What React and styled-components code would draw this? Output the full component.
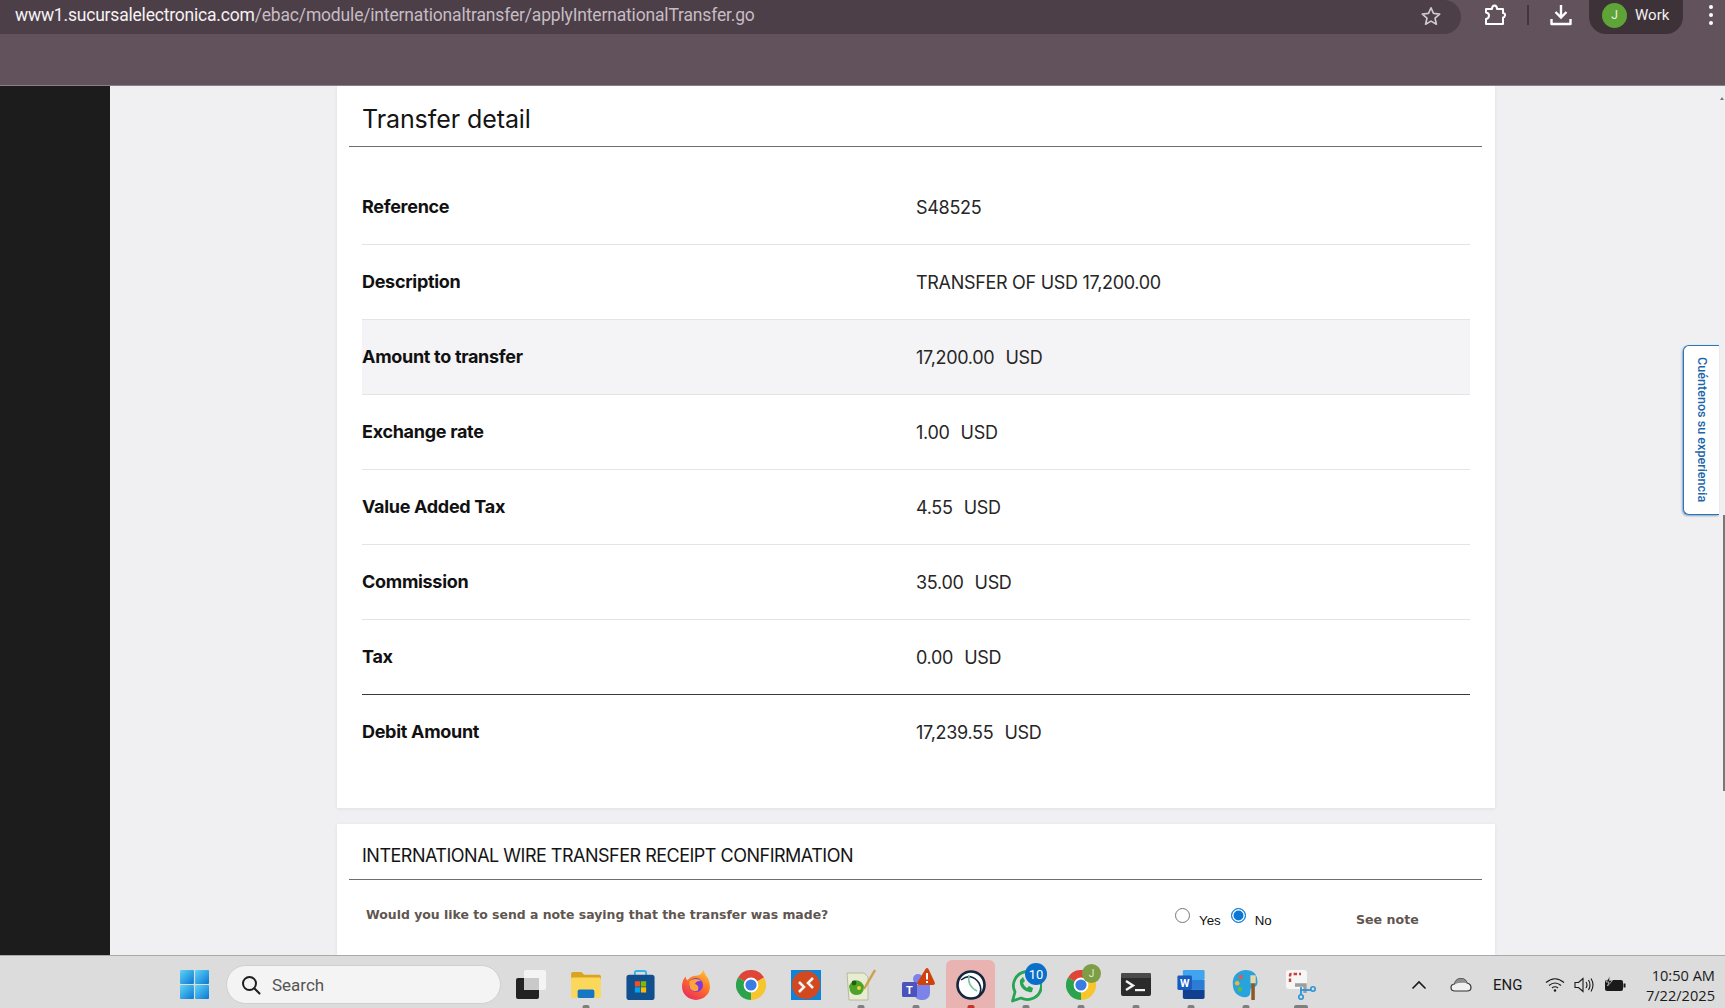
import * as React from "react";
import styled, { createGlobalStyle } from "styled-components";

const GlobalStyle = createGlobalStyle`
  html, body { margin: 0; padding: 0; height: 100%; overflow: hidden; }
  body { font-family: "Roboto", "Liberation Sans", sans-serif; background: #f0f0f2; }
  #root { height: 1008px; }
`;

const rows = [
  { label: "Reference", value: "S48525" },
  { label: "Description", value: "TRANSFER OF USD 17,200.00" },
  { label: "Amount to transfer", value: "17,200.00", unit: "USD", shaded: true },
  { label: "Exchange rate", value: "1.00", unit: "USD" },
  { label: "Value Added Tax", value: "4.55", unit: "USD" },
  { label: "Commission", value: "35.00", unit: "USD" },
  { label: "Tax", value: "0.00", unit: "USD", dark: true },
  { label: "Debit Amount", value: "17,239.55", unit: "USD", last: true },
];

const WindowsIcon = () => (
  <svg width="29" height="29" viewBox="0 0 30 30">
    <defs>
      <linearGradient id="win" x1="0" y1="0" x2="1" y2="1">
        <stop offset="0" stopColor="#5fd4f6" />
        <stop offset="1" stopColor="#0a78d4" />
      </linearGradient>
    </defs>
    <rect x="0" y="0" width="14.4" height="14.4" rx="1" fill="url(#win)" />
    <rect x="15.6" y="0" width="14.4" height="14.4" rx="1" fill="url(#win)" />
    <rect x="0" y="15.6" width="14.4" height="14.4" rx="1" fill="url(#win)" />
    <rect x="15.6" y="15.6" width="14.4" height="14.4" rx="1" fill="url(#win)" />
  </svg>
);

const SearchIcon = () => (
  <svg width="20" height="20" viewBox="0 0 20 20" fill="none" stroke="#1e1e1e" strokeWidth="2">
    <circle cx="8.5" cy="8.5" r="6.5" />
    <path d="M13.5 13.5 L18.5 18.5" strokeLinecap="round" />
  </svg>
);

const TaskViewIcon = () => (
  <svg width="30" height="29" viewBox="0 0 30 29">
    <rect x="8" y="0" width="22" height="20" rx="2" fill="#f4f4f4" />
    <rect x="0" y="8" width="23" height="21" rx="2" fill="#222" />
    <rect x="8" y="8" width="15" height="12" fill="#c9c9c9" />
  </svg>
);

const FolderIcon = () => (
  <svg width="30" height="27" viewBox="0 0 32 29">
    <path d="M0 3 Q0 1 2 1 H11 L14 4 H30 Q32 4 32 6 V10 H0 Z" fill="#d9a520" />
    <path d="M0 7 H30 Q32 7 32 9 V27 Q32 29 30 29 H2 Q0 29 0 27 Z" fill="#fbd75c" />
    <rect x="7" y="20" width="18" height="9" rx="2" fill="#1576c4" />
  </svg>
);

const StoreIcon = () => (
  <svg width="29" height="30" viewBox="0 0 30 32">
    <path d="M9 7 V3 Q9 1 11 1 H19 Q21 1 21 3 V7" fill="none" stroke="#37b4e6" strokeWidth="2" />
    <rect x="0" y="5" width="30" height="27" rx="3" fill="#10508f" />
    <rect x="9" y="12" width="5.6" height="5.6" fill="#f25022" />
    <rect x="15.4" y="12" width="5.6" height="5.6" fill="#7fba00" />
    <rect x="9" y="18.4" width="5.6" height="5.6" fill="#00a4ef" />
    <rect x="15.4" y="18.4" width="5.6" height="5.6" fill="#ffb900" />
  </svg>
);

const FirefoxIcon = () => (
  <svg width="28" height="30" viewBox="0 0 30 32">
    <defs>
      <linearGradient id="ff" x1="0.8" y1="0" x2="0.2" y2="1">
        <stop offset="0" stopColor="#ffc02e" />
        <stop offset="0.5" stopColor="#ff6a2b" />
        <stop offset="1" stopColor="#e8295f" />
      </linearGradient>
    </defs>
    <path d="M23 0 Q25 6 28 9 Q30 13 30 18 A15 14 0 0 1 0 18 Q0 11 4 7 Q4 10 6 11 Q9 6 15 6 Q21 6 23 0 Z" fill="url(#ff)" />
    <circle cx="15" cy="16" r="7.5" fill="#7b3ae0" />
    <path d="M8 12 Q15 7 21 12 Q15 11 14 15 Q19 17 17 22 Q12 24 9 20 Q7 16 8 12 Z" fill="#ffa436" />
  </svg>
);

const ChromeIcon = ({ size = 30 }) => (
  <svg width={size} height={size} viewBox="0 0 30 30">
    <path d="M15 15 L2 7.5 A15 15 0 0 1 28 7.5 Z" fill="#de4437" />
    <path d="M15 15 L28 7.5 A15 15 0 0 1 15 30 Z" fill="#f7c52c" />
    <path d="M15 15 L15 30 A15 15 0 0 1 2 7.5 Z" fill="#2ba24c" />
    <circle cx="15" cy="15" r="7.4" fill="#fff" />
    <circle cx="15" cy="15" r="5.6" fill="#3b7ce4" />
  </svg>
);

const RemoteIcon = () => (
  <svg width="30" height="30" viewBox="0 0 30 30">
    <rect width="30" height="30" fill="#1183d6" />
    <circle cx="15" cy="15" r="14" fill="#d2491f" />
    <path d="M8 12 L13 17 L8 22 M22 8 L17 13 L22 18" fill="none" stroke="#f3f3f3" strokeWidth="2.6" />
  </svg>
);

const NotepadIcon = () => (
  <svg width="30" height="32" viewBox="0 0 30 32">
    <path d="M1 4 H18 L22 8 V31 H3 Z" fill="#e8ecd2" stroke="#aab18a" strokeWidth="0.8" />
    <path d="M3 17 Q8 8 15 13 Q21 18 15 25 Q7 28 4 22 Z" fill="#4da22a" />
    <circle cx="8" cy="14" r="2.4" fill="#1f5f10" />
    <circle cx="13" cy="19" r="2" fill="#e7d43a" />
    <path d="M18 20 L29 1" stroke="#c9a24a" strokeWidth="2.4" />
  </svg>
);

const TeamsIcon = () => (
  <svg width="38" height="36" viewBox="0 0 38 36">
    <circle cx="21" cy="12" r="5" fill="#7b83eb" />
    <circle cx="29" cy="14" r="3.5" fill="#5059c9" />
    <path d="M17 18 H33 V26 A7 7 0 0 1 26 33 H24 A7 7 0 0 1 17 26 Z" fill="#7b83eb" />
    <rect x="5" y="15" width="15" height="15" rx="1.5" fill="#4b53bc" />
    <text x="12.5" y="27" fontSize="11" fontWeight="700" fill="#fff" textAnchor="middle" fontFamily="Roboto, sans-serif">T</text>
    <path d="M28.5 2 Q30 0 31.5 2 L38 16 Q38 18 36 18 H22 Q20 18 20 16 Z" fill="#d1410c" />
    <rect x="29" y="6" width="2" height="6.5" fill="#fff" />
    <rect x="29" y="14" width="2" height="2" fill="#fff" />
  </svg>
);

const OrbitIcon = () => (
  <svg width="30" height="30" viewBox="0 0 30 30" fill="none">
    <circle cx="15" cy="15" r="13.5" fill="#fff" stroke="#12263f" strokeWidth="2.6" />
    <path d="M5 10 Q15 2 23 13 Q27 20 22 27" stroke="#12263f" strokeWidth="1.6" />
    <path d="M13 5 Q11 16 21 21" stroke="#7cc3a0" strokeWidth="1.6" />
  </svg>
);

const WhatsappIcon = () => (
  <svg width="32" height="36" viewBox="0 0 32 36" fill="none">
    <path d="M2.5 34 L5 25 A14 14 0 1 1 11 31 Z" stroke="#27a552" strokeWidth="2.8" strokeLinejoin="round" fill="#fff" fillOpacity="0.15" />
    <path d="M10 13 Q9 18 13 22 Q17 26 22 25 L23 21 L19 19 L17 21 Q14 19 13 16 L15 14 L13 10 Z" fill="#27a552" />
  </svg>
);

const TerminalIcon = () => (
  <svg width="30" height="23" viewBox="0 0 30 23">
    <rect width="30" height="23" rx="2" fill="#2b2b2b" />
    <rect width="30" height="5" rx="1.5" fill="#4a4a4a" />
    <path d="M5 8 L12 12.5 L5 17" fill="none" stroke="#f2f2f2" strokeWidth="2.4" />
    <rect x="14" y="16" width="10" height="2.2" fill="#f2f2f2" />
  </svg>
);

const WordIcon = () => (
  <svg width="30" height="29" viewBox="0 0 30 32">
    <rect x="6" y="0" width="24" height="11" rx="1.5" fill="#41a5ee" />
    <rect x="6" y="11" width="24" height="11" fill="#2b7cd3" />
    <path d="M6 22 H30 V30 Q30 32 28 32 H8 Q6 32 6 30 Z" fill="#103f91" />
    <rect x="0" y="6" width="16" height="16" rx="1.5" fill="#185abd" />
    <text x="8" y="18.5" fontSize="12" fontWeight="700" fill="#fff" textAnchor="middle" fontFamily="Roboto, sans-serif">W</text>
  </svg>
);

const PaintIcon = () => (
  <svg width="28" height="30" viewBox="0 0 30 34">
    <path d="M14 0 Q28 0 28 14 Q28 19 24 19 Q20 19 20 24 Q20 31 13 31 Q0 29 0 15 Q0 2 14 0 Z" fill="#27a3dd" />
    <circle cx="9" cy="8" r="2.6" fill="#e25c4c" />
    <circle cx="5" cy="15" r="2.6" fill="#f2b632" />
    <circle cx="8" cy="22" r="2.6" fill="#5dbb46" />
    <rect x="21" y="14" width="4" height="20" fill="#8b5a2b" />
    <path d="M20 6 H26 V15 H20 Z" fill="#e8d8a8" />
  </svg>
);

const SnipIcon = () => (
  <svg width="30" height="30" viewBox="0 0 30 30" fill="none">
    <rect x="0" y="0" width="21" height="19" rx="3" fill="#f6f6f6" />
    <path d="M4 12 V5 Q4 4 5 4 H15" stroke="#c6423d" strokeWidth="2.4" strokeDasharray="3.5 2" />
    <path d="M9 15 H19 V23" stroke="#9d9d9d" strokeWidth="3.4" />
    <path d="M14 20 H25" stroke="#2c94d8" strokeWidth="1.8" />
    <circle cx="27" cy="19" r="2.2" stroke="#2c94d8" strokeWidth="1.6" />
    <circle cx="15" cy="27" r="2.2" stroke="#2c94d8" strokeWidth="1.6" />
    <path d="M15 25 V17" stroke="#2c94d8" strokeWidth="1.8" />
  </svg>
);

const apps = [
  { icon: <TaskViewIcon /> },
  { icon: <FolderIcon />, open: true },
  { icon: <StoreIcon /> },
  { icon: <FirefoxIcon /> },
  { icon: <ChromeIcon /> },
  { icon: <RemoteIcon /> },
  { icon: <NotepadIcon />, open: true },
  { icon: <TeamsIcon />, open: true },
  { icon: <OrbitIcon />, active: true },
  { icon: <WhatsappIcon />, open: true, badge: "10" },
  { icon: <ChromeIcon />, open: true, avatar: "J" },
  { icon: <TerminalIcon />, open: true },
  { icon: <WordIcon />, open: true },
  { icon: <PaintIcon />, open: true },
  { icon: <SnipIcon />, open: true, wide: true },
];

export default function App() {
  return (
    <Page>
      <GlobalStyle />
      <BrowserBar>
        <TopRow>
          <AddressBar>
            <Url>
              <b>www1.sucursalelectronica.com</b>/ebac/module/internationaltransfer/applyInternationalTransfer.go
            </Url>
            <svg width="22" height="22" viewBox="0 0 24 24" fill="none" stroke="#cfc8cc" strokeWidth="1.8" strokeLinejoin="round">
              <path d="M12 3 L14.7 9.2 L21.5 9.9 L16.4 14.4 L17.9 21 L12 17.6 L6.1 21 L7.6 14.4 L2.5 9.9 L9.3 9.2 Z" />
            </svg>
          </AddressBar>
          <ToolIcons>
            <svg width="22" height="22" viewBox="0 0 22 22" fill="none" stroke="#fff" strokeWidth="2" strokeLinejoin="round">
              <path d="M2 5 H8 Q8 1.5 10.5 1.5 Q13 1.5 13 5 H19 V9 Q21.5 9.5 21 11.5 Q20.5 13.5 19 13.5 V20 H2 V15 Q5 14.5 5 11.5 Q5 9 2 8.5 Z" />
            </svg>
            <Separator />
            <svg width="22" height="22" viewBox="0 0 22 22" fill="none" stroke="#fff" strokeWidth="2.4">
              <path d="M11 1 V13 M5.5 8 L11 13.5 L16.5 8" />
              <path d="M1.5 15 V20 H20.5 V15" strokeLinejoin="round" />
            </svg>
          </ToolIcons>
          <Profile>
            <Avatar>J</Avatar>
            Work
          </Profile>
          <MenuDots>
            <i /><i /><i />
          </MenuDots>
        </TopRow>
      </BrowserBar>

      <Viewport>
        <BlackRail />
        <Content>
          <Card $height={722}>
            <CardTitle>Transfer detail</CardTitle>
            <Table>
              {rows.map((r) => (
                <Row key={r.label} $shaded={r.shaded} $dark={r.dark} $last={r.last}>
                  <Label>{r.label}</Label>
                  <Value>
                    {r.value}
                    {r.unit && <Unit>{r.unit}</Unit>}
                  </Value>
                </Row>
              ))}
            </Table>
          </Card>
          <Card>
            <SectionTitle>INTERNATIONAL WIRE TRANSFER RECEIPT CONFIRMATION</SectionTitle>
            <NoteRow>
              <Question>Would you like to send a note saying that the transfer was made?</Question>
              <Choices>
                <Radio />
                <ChoiceLabel>Yes</ChoiceLabel>
                <Radio $on />
                <ChoiceLabel>No</ChoiceLabel>
              </Choices>
              <SeeNote>See note</SeeNote>
            </NoteRow>
          </Card>
        </Content>
        <Feedback>Cuéntenos su experiencia</Feedback>
        <ScrollArrow />
        <ScrollThumb />
      </Viewport>

      <Taskbar>
        <StartSlot><WindowsIcon /></StartSlot>
        <SearchBox>
          <SearchIcon />
          Search
        </SearchBox>
        {apps.map((a, i) => (
          <AppSlot key={i} $active={a.active}>
            {a.icon}
            {a.badge && <Badge>{a.badge}</Badge>}
            {a.avatar && <AvatarBadge>{a.avatar}</AvatarBadge>}
            {(a.open || a.active) && <Dot $active={a.active} $wide={a.wide} />}
          </AppSlot>
        ))}
        <Tray>
          <svg width="16" height="10" viewBox="0 0 16 10" fill="none" stroke="#1a1a1a" strokeWidth="1.6">
            <path d="M1.5 8.5 L8 2 L14.5 8.5" />
          </svg>
          <CloudIcon width="22" height="15" viewBox="0 0 22 15" stroke="#333" strokeWidth="1.2">
            <path d="M5 14 Q1 14 1 10.5 Q1 7.5 4.5 7 Q6 1.5 11 1.5 Q15.5 1.5 17 6 Q21 7 21 10.5 Q21 14 17 14 Z" fill="#f1f1f1" />
            <path d="M4.5 7 Q6 1.5 11 1.5 Q15.5 1.5 17 6 Q11 5 4.5 7 Z" fill="#8e8e8e" stroke="none" />
          </CloudIcon>
          <Lang>ENG</Lang>
          <TrayIcons>
            <svg width="20" height="16" viewBox="0 0 20 16" fill="none" stroke="#1a1a1a" strokeWidth="1.2">
              <path d="M1 5.5 Q10 -2 19 5.5 M4 8.5 Q10 3.5 16 8.5 M7 11 Q10 8.5 13 11" />
              <circle cx="10" cy="13.5" r="1.2" fill="#1a1a1a" stroke="none" />
            </svg>
            <svg width="21" height="16" viewBox="0 0 21 16" fill="none" stroke="#1a1a1a" strokeWidth="1.1">
              <path d="M1 5.5 H4.5 L9 1.5 V14.5 L4.5 10.5 H1 Z" />
              <path d="M12 5 Q14 8 12 11 M14.5 3 Q17.5 8 14.5 13 M17 1.5 Q21 8 17 14.5" />
            </svg>
            <svg width="22" height="17" viewBox="0 0 22 17">
              <rect x="1" y="4" width="18" height="11" rx="2" fill="#1a1a1a" />
              <rect x="19.5" y="7.5" width="2" height="4" fill="#1a1a1a" />
              <path d="M6 0 L2 6 H5 L3.5 10 L8.5 4.5 H5.5 Z" fill="#1a1a1a" stroke="#dcdcdc" strokeWidth="0.7" />
            </svg>
          </TrayIcons>
          <Clock>
            <span>10:50 AM</span>
            <span>7/22/2025</span>
          </Clock>
        </Tray>
      </Taskbar>
    </Page>
  );
}

const Page = styled.div`
  position: relative;
  width: 1725px;
  height: 1008px;
  display: flex;
  flex-direction: column;
  overflow: hidden;
`;

const BrowserBar = styled.div`
  height: 86px;
  flex: none;
  background: #61525c;
  border-bottom: 1px solid #8b7f87;
  box-sizing: border-box;
`;

const TopRow = styled.div`
  display: flex;
  align-items: flex-start;
  height: 34px;
`;

const AddressBar = styled.div`
  width: 1461px;
  height: 34px;
  flex: none;
  box-sizing: border-box;
  display: flex;
  align-items: center;
  justify-content: space-between;
  padding: 0 19px 3px 15px;
  background: #4c3f48;
  border-radius: 0 17px 17px 0;
`;

const Url = styled.div`
  font-family: "Roboto", sans-serif;
  font-size: 17.5px;
  line-height: 20px;
  margin-top: -2px;
  letter-spacing: -0.17px;
  color: #c7bcc3;
  white-space: nowrap;
  b {
    font-weight: 400;
    letter-spacing: -0.2px;
    color: #f6f2f4;
  }
`;

const ToolIcons = styled.div`
  display: flex;
  align-items: center;
  width: 128px;
  height: 30px;
  flex: none;
  padding-left: 23px;
  box-sizing: border-box;
`;

const Separator = styled.div`
  width: 2px;
  height: 20px;
  margin: 0 21px 0 21px;
  background: #43363e;
`;

const Profile = styled.div`
  width: 94px;
  height: 34px;
  flex: none;
  box-sizing: border-box;
  display: flex;
  align-items: center;
  gap: 8px;
  padding: 0 0 4px 13px;
  color: #f3eff1;
  font-size: 15px;
  background: #3e3239;
  border-radius: 0 0 17px 17px;
`;

const Avatar = styled.div`
  width: 25px;
  height: 25px;
  border-radius: 50%;
  background: #5fa436;
  color: #e8f3e0;
  font-size: 12px;
  display: flex;
  align-items: center;
  justify-content: center;
`;

const MenuDots = styled.div`
  display: flex;
  flex-direction: column;
  align-items: center;
  gap: 4px;
  margin-left: 26px;
  margin-top: 5px;
  i {
    width: 4px;
    height: 4px;
    border-radius: 50%;
    background: #fff;
  }
`;

const Viewport = styled.div`
  position: relative;
  flex: 1;
  display: flex;
  min-height: 0;
  overflow: hidden;
  background: #f0f0f2;
`;

const BlackRail = styled.div`
  width: 110px;
  flex: none;
  background: #1c1c1c;
`;

const Content = styled.div`
  width: 1158px;
  margin-left: 227px;
  display: flex;
  flex-direction: column;
  gap: 16px;
`;

const Card = styled.div`
  flex: ${(p) => (p.$height ? "none" : "1")};
  box-sizing: border-box;
  height: ${(p) => (p.$height ? p.$height + "px" : "auto")};
  padding: 0 13px 0 12px;
  background: #fff;
  box-shadow: 0 1px 4px rgba(0, 0, 0, 0.07);
`;

const CardTitle = styled.h2`
  margin: 0;
  height: 61px;
  box-sizing: border-box;
  padding: 6px 0 0 13px;
  display: flex;
  align-items: center;
  font-family: "Inter", sans-serif;
  font-size: 25px;
  font-weight: 400;
  letter-spacing: -0.08px;
  color: #141414;
  border-bottom: 1px solid #6e6e6e;
`;

const Table = styled.div`
  margin: 23px 12px 0 13px;
`;

const Row = styled.div`
  height: 75px;
  box-sizing: border-box;
  display: flex;
  align-items: center;
  background: ${(p) => (p.$shaded ? "#f4f4f6" : "transparent")};
  border-bottom: 1px solid ${(p) => (p.$last ? "transparent" : p.$dark ? "#3a3a3a" : "#e4e4e6")};
`;

const Label = styled.div`
  width: 554px;
  flex: none;
  font-family: "Inter", sans-serif;
  font-size: 18px;
  font-weight: 700;
  letter-spacing: -0.3px;
  color: #111;
  margin-top: -2px;
`;

const Value = styled.div`
  font-family: "Inter", sans-serif;
  font-size: 18px;
  letter-spacing: -0.3px;
  color: #262626;
`;

const Unit = styled.span`
  margin-left: 11px;
`;

const SectionTitle = styled.h3`
  margin: 0;
  height: 56px;
  box-sizing: border-box;
  padding: 8px 0 0 13px;
  display: flex;
  align-items: center;
  font-family: "Inter", sans-serif;
  font-size: 18px;
  font-weight: 400;
  letter-spacing: -0.5px;
  color: #141414;
  border-bottom: 1px solid #6e6e6e;
`;

const NoteRow = styled.div`
  display: flex;
  align-items: flex-start;
  padding: 27px 0 0 17px;
`;

const Question = styled.div`
  width: 809px;
  flex: none;
  font-family: "DejaVu Sans", Verdana, sans-serif;
  font-size: 12.45px;
  line-height: 16px;
  font-weight: 700;
  color: #5f5650;
`;

const Choices = styled.div`
  display: flex;
  align-items: center;
  width: 181px;
  height: 16px;
  margin-top: 5px;
  flex: none;
`;

const Radio = styled.span`
  width: 15px;
  height: 15px;
  flex: none;
  box-sizing: border-box;
  border-radius: 50%;
  margin-top: -9px;
  border: ${(p) => (p.$on ? "1.5px solid #0a78d4" : "1px solid #767676")};
  background: ${(p) => (p.$on ? "#0a78d4" : "#fff")};
  box-shadow: ${(p) => (p.$on ? "inset 0 0 0 1.5px #fff" : "none")};
`;

const ChoiceLabel = styled.span`
  font-family: "Liberation Sans", Arial, sans-serif;
  font-size: 13.3px;
  color: #111;
  margin: 0 10px 0 9px;
`;

const SeeNote = styled.div`
  font-family: "DejaVu Sans", Verdana, sans-serif;
  font-size: 12.6px;
  line-height: 16px;
  margin-top: 5px;
  font-weight: 700;
  color: #5f5650;
`;

const Feedback = styled.div`
  position: absolute;
  top: 259px;
  right: 6px;
  width: 36px;
  height: 170px;
  box-sizing: border-box;
  padding-left: 2px;
  display: flex;
  align-items: center;
  justify-content: center;
  writing-mode: vertical-rl;
  font-family: "Roboto", Arial, sans-serif;
  font-size: 12.6px;
  font-weight: 500;
  color: #1a66aa;
  background: #fff;
  border: 1.5px solid #2a76b8;
  border-right: none;
  border-radius: 6px 0 0 6px;
  box-shadow: -1px 1px 2px rgba(30, 90, 150, 0.5);
`;

const ScrollArrow = styled.div`
  position: absolute;
  top: 11px;
  right: 1px;
  width: 0;
  height: 0;
  border-left: 2px solid transparent;
  border-right: 2px solid transparent;
  border-bottom: 3px solid #777;
`;

const ScrollThumb = styled.div`
  position: absolute;
  top: 429px;
  right: 0;
  width: 2px;
  height: 276px;
  background: #777;
`;

const Taskbar = styled.div`
  height: 53px;
  flex: none;
  box-sizing: border-box;
  display: flex;
  align-items: flex-end;
  padding-left: 166px;
  background: #dcdcdc;
  border-top: 1px solid #a9a9a9;
`;

const StartSlot = styled.div`
  width: 56px;
  height: 52px;
  flex: none;
  box-sizing: border-box;
  padding-top: 5px;
  display: flex;
  align-items: center;
  justify-content: center;
`;

const SearchBox = styled.div`
  width: 275px;
  height: 39px;
  flex: none;
  box-sizing: border-box;
  margin: 0 2px 4px 4px;
  padding-left: 14px;
  display: flex;
  align-items: center;
  gap: 11px;
  font-size: 17px;
  color: #555;
  background: #f4f4f4;
  border: 1px solid #cfcfcf;
  border-radius: 20px;
`;

const AppSlot = styled.div`
  position: relative;
  width: 55px;
  height: 52px;
  flex: none;
  box-sizing: border-box;
  padding-top: 5px;
  display: flex;
  align-items: center;
  justify-content: center;
  &::before {
    content: "";
    display: ${(p) => (p.$active ? "block" : "none")};
    position: absolute;
    left: 3px;
    right: 3px;
    top: 4px;
    bottom: 0;
    background: #e9b3b1;
    border-radius: 6px 6px 0 0;
  }
  svg {
    position: relative;
  }
`;

const Dot = styled.span`
  position: absolute;
  bottom: 0;
  left: 50%;
  width: ${(p) => (p.$wide ? "14px" : "7px")};
  height: 3px;
  transform: translateX(-50%);
  border-radius: 2px 2px 0 0;
  background: ${(p) => (p.$active ? "#c4332c" : "#7f7f7f")};
`;

const Badge = styled.span`
  position: absolute;
  top: 7px;
  right: 6px;
  min-width: 22px;
  height: 22px;
  border-radius: 50%;
  display: flex;
  align-items: center;
  justify-content: center;
  font-size: 13px;
  color: #fff;
  background: #0a6fc9;
`;

const AvatarBadge = styled.span`
  position: absolute;
  top: 8px;
  right: 7px;
  width: 19px;
  height: 19px;
  border-radius: 50%;
  display: flex;
  align-items: center;
  justify-content: center;
  font-size: 10px;
  color: #dfeccf;
  background: #7d9e45;
`;

const Tray = styled.div`
  flex: 1;
  align-self: stretch;
  box-sizing: border-box;
  display: flex;
  align-items: center;
  padding: 5px 10px 0 83px;
  color: #1a1a1a;
`;

const CloudIcon = styled.svg`
  margin-left: 23px;
`;

const Lang = styled.div`
  font-size: 15px;
  margin-left: 21px;
`;

const TrayIcons = styled.div`
  display: flex;
  align-items: center;
  gap: 9px;
  margin-left: 23px;
`;

const Clock = styled.div`
  margin-left: auto;
  display: flex;
  flex-direction: column;
  align-items: flex-end;
  gap: 2px;
  font-family: "Open Sans", sans-serif;
  font-size: 14.6px;
  line-height: 18px;
`;
